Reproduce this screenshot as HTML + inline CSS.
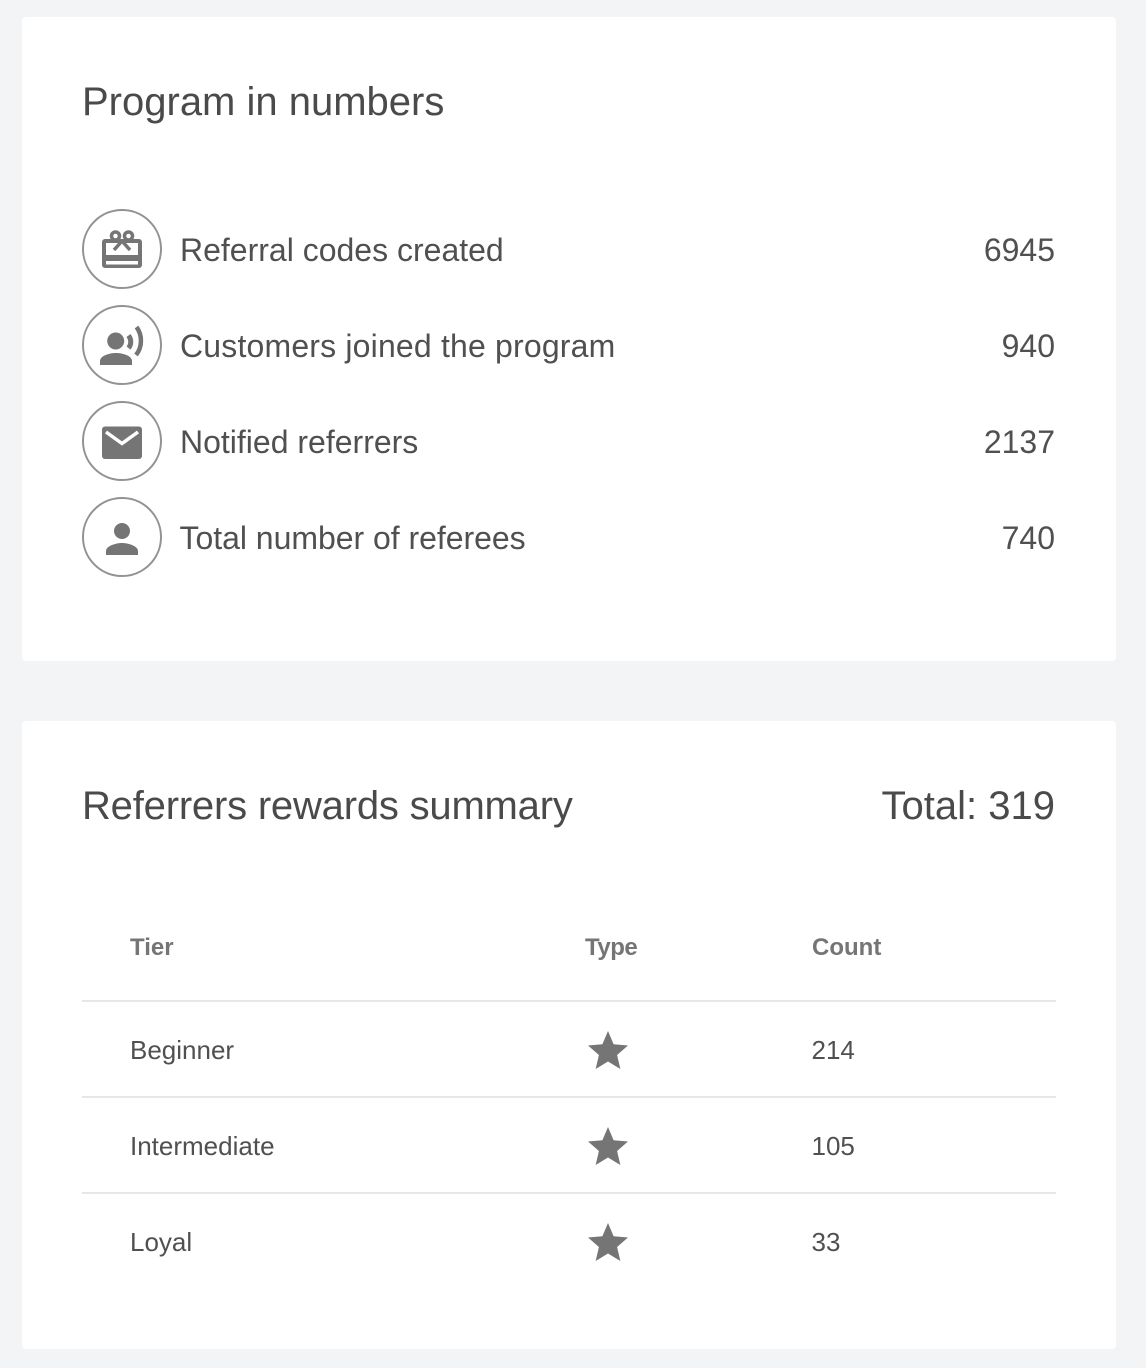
<!DOCTYPE html>
<html><head><meta charset="utf-8">
<style>
html,body{margin:0;padding:0;background:#f3f4f6;}
body{position:relative;width:1146px;height:1368px;overflow:hidden;font-family:"Liberation Sans",sans-serif;color:#4c4c4c;}
.card{position:absolute;left:22px;width:1094px;background:#fff;border-radius:4px;}
.t{position:absolute;white-space:nowrap;line-height:40px;height:40px;}
.h{font-size:40px;line-height:50px;height:50px;color:#4a4a4a;}
.r{font-size:32px;color:#505050;}
.n{font-size:32px;color:#505050;right:91px;}
.th{font-size:24px;font-weight:bold;color:#757575;}
.td{font-size:26px;color:#505050;}
.line{position:absolute;left:82px;width:974px;height:2px;background:#e6e7e8;}
svg{position:absolute;}
</style></head><body>
<div class="card" style="top:17px;height:644px;"></div>
<div class="card" style="top:721px;height:628px;"></div>

<div class="t h" style="left:82px;top:77px;">Program in numbers</div>

<svg style="left:82px;top:209px" width="80" height="80" viewBox="0 0 80 80"><circle cx="40" cy="40" r="39" fill="none" stroke="#929292" stroke-width="2"/>
<path fill-rule="evenodd" fill="#757575" d="M23 30h34a3 3 0 0 1 3 3v23a3 3 0 0 1-3 3H23a3 3 0 0 1-3-3V33a3 3 0 0 1 3-3zM24 34v12h32V34zM24 52v3.500h32V52z"/>
<g fill="none" stroke="#757575" stroke-width="3.500"><circle cx="33.500" cy="27" r="4"/><circle cx="46.500" cy="27" r="4"/><path d="M40 32l-8 9M40 32l8 9"/></g>
</svg>

<svg style="left:82px;top:305px" width="80" height="80" viewBox="0 0 80 80"><circle cx="40" cy="40" r="39" fill="none" stroke="#929292" stroke-width="2"/>
<circle cx="33.700" cy="36" r="8.500" fill="#757575"/>
<path fill="#757575" d="M18 60v-4c0-5 9-8 16-8s16 3 16 8v4z"/>
<path fill="none" stroke="#757575" stroke-width="5" d="M46.500 30.500c3 4 3 9 0 12.500"/>
<path fill="none" stroke="#757575" stroke-width="4.500" d="M54.500 22c6 8 6 20-.5 28"/>
</svg>

<svg style="left:82px;top:401px" width="80" height="80" viewBox="0 0 80 80"><circle cx="40" cy="40" r="39" fill="none" stroke="#929292" stroke-width="2"/>
<rect x="20" y="25.500" width="40" height="32.500" rx="3" fill="#757575"/>
<path fill="none" stroke="#fff" stroke-width="3.500" d="M24 31l16 11.500L56 31"/>
</svg>

<svg style="left:82px;top:497px" width="80" height="80" viewBox="0 0 80 80"><circle cx="40" cy="40" r="39" fill="none" stroke="#929292" stroke-width="2"/>
<circle cx="40" cy="34" r="8" fill="#757575"/>
<path fill="#757575" d="M24 58v-4c0-5 10-8 16-8s16 3 16 8v4z"/>
</svg>

<div class="t r" style="left:180px;top:230px;">Referral codes created</div>
<div class="t n" style="top:230px;">6945</div>
<div class="t r" style="left:180px;top:326px;letter-spacing:.18px;">Customers joined the program</div>
<div class="t n" style="top:326px;">940</div>
<div class="t r" style="left:180px;top:422px;">Notified referrers</div>
<div class="t n" style="top:422px;">2137</div>
<div class="t r" style="left:179.500px;top:518px;letter-spacing:-.03px;">Total number of referees</div>
<div class="t n" style="top:518px;">740</div>

<div class="t h" style="left:82px;top:781px;letter-spacing:-.2px;">Referrers rewards summary</div>
<div class="t h" style="right:91px;top:781px;">Total: 319</div>

<div class="t th" style="left:130px;top:928px;">Tier</div>
<div class="t th" style="left:585px;top:928px;letter-spacing:-.5px;">Type</div>
<div class="t th" style="left:812px;top:928px;">Count</div>
<div class="line" style="top:1000px;"></div>
<div class="line" style="top:1096px;"></div>
<div class="line" style="top:1192px;"></div>

<div class="t td" style="left:130px;top:1030px;">Beginner</div>
<div class="t td" style="left:811.500px;top:1030px;">214</div>
<div class="t td" style="left:130px;top:1126px;">Intermediate</div>
<div class="t td" style="left:811.500px;top:1126px;">105</div>
<div class="t td" style="left:130px;top:1222px;">Loyal</div>
<div class="t td" style="left:811.500px;top:1222px;">33</div>

<svg style="left:588px;top:1031px" width="40" height="40" viewBox="2 2 20 20"><path fill="#757575" d="M12 17.270L18.180 21l-1.640-7.030L22 9.240l-7.190-.610L12 2 9.190 8.630 2 9.240l5.460 4.730L5.820 21z"/></svg>
<svg style="left:588px;top:1127px" width="40" height="40" viewBox="2 2 20 20"><path fill="#757575" d="M12 17.270L18.180 21l-1.640-7.030L22 9.240l-7.190-.610L12 2 9.190 8.630 2 9.240l5.460 4.730L5.820 21z"/></svg>
<svg style="left:588px;top:1223px" width="40" height="40" viewBox="2 2 20 20"><path fill="#757575" d="M12 17.270L18.180 21l-1.640-7.030L22 9.240l-7.190-.610L12 2 9.190 8.630 2 9.240l5.460 4.730L5.820 21z"/></svg>
</body></html>
